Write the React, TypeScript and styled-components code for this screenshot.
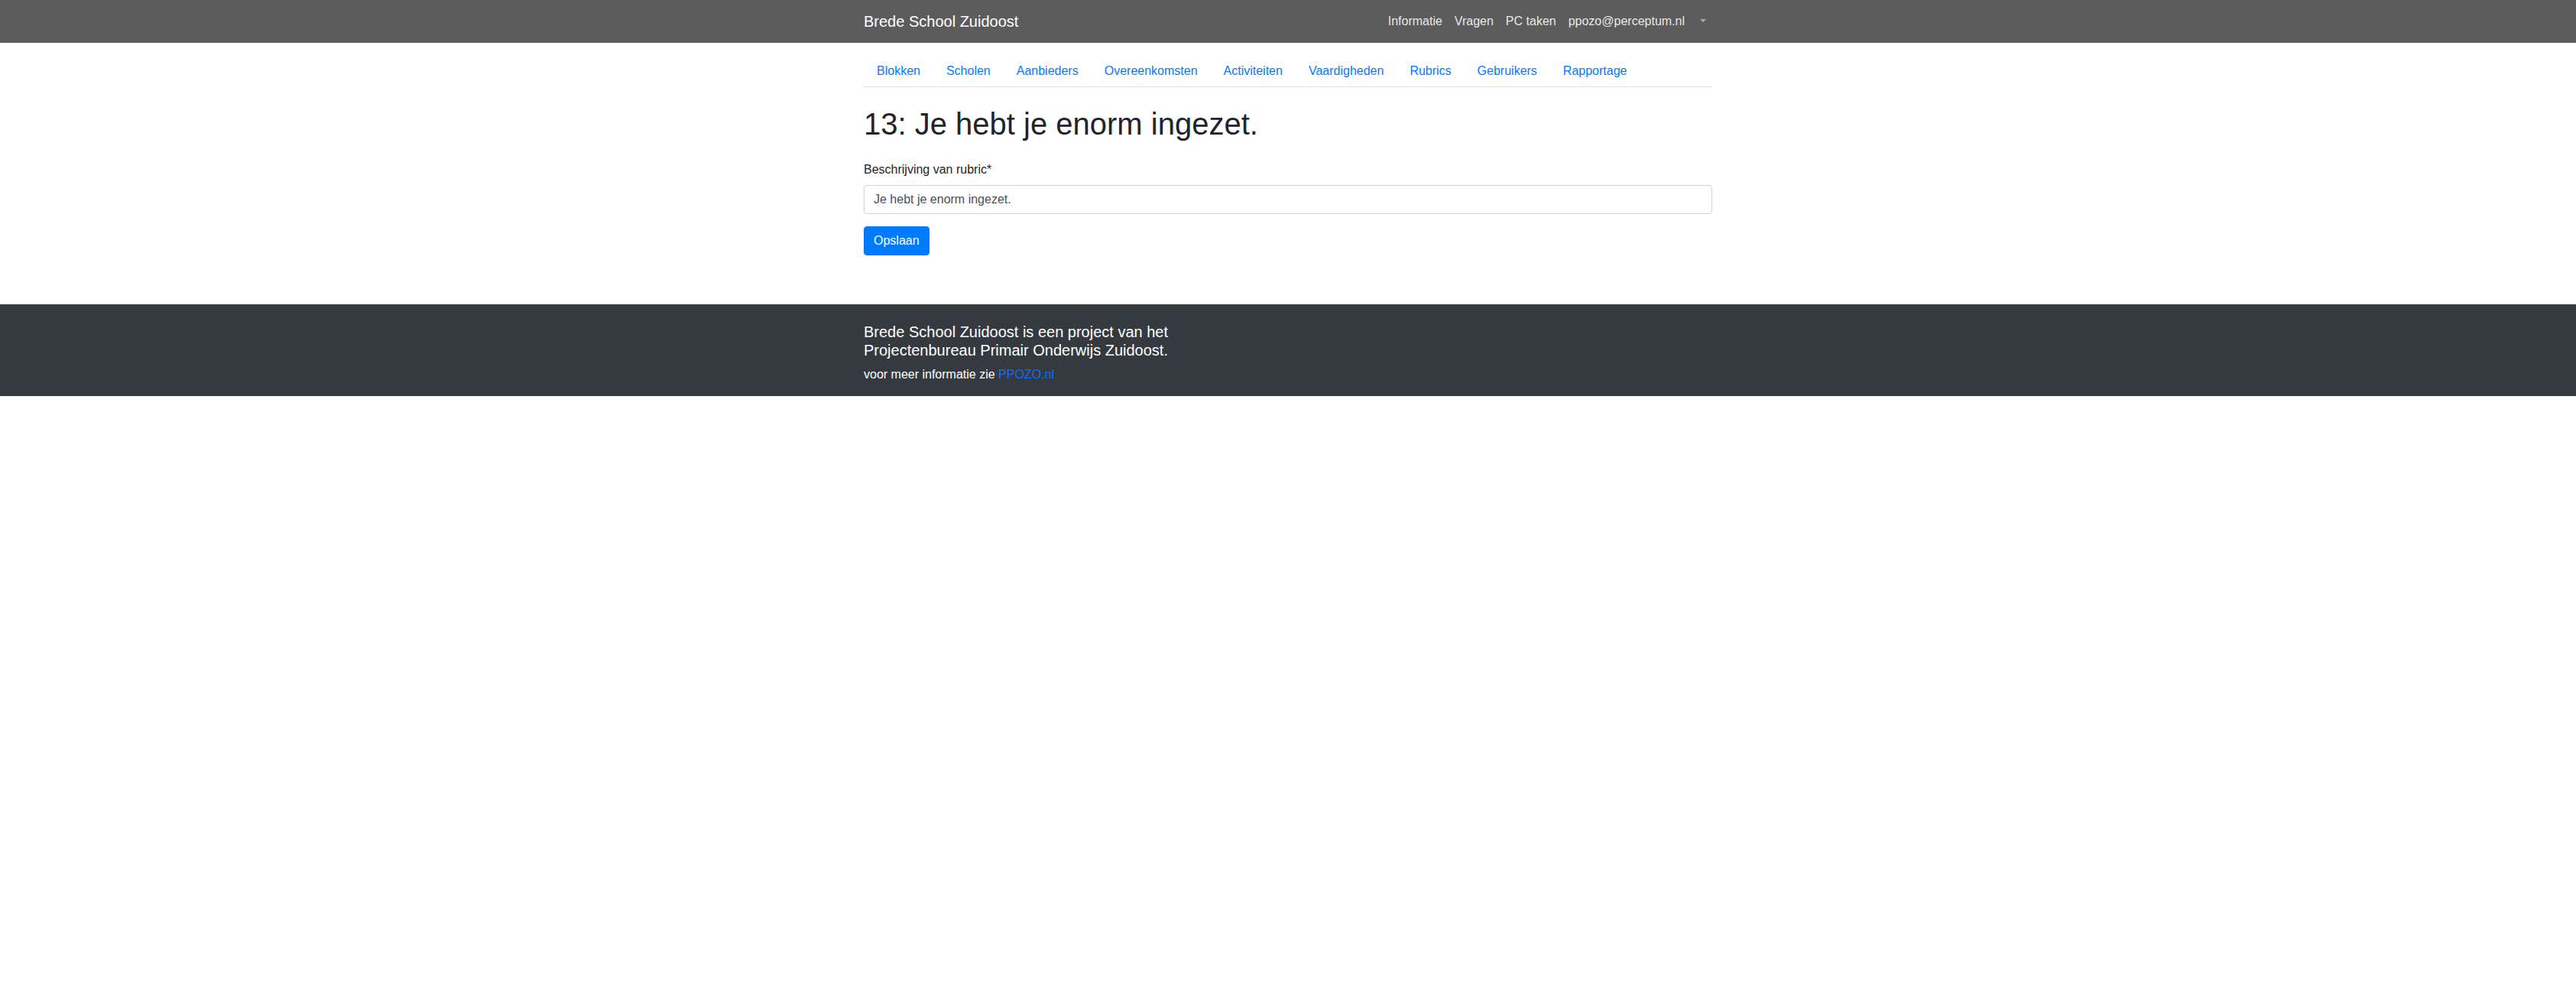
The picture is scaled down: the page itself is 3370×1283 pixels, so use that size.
import React from "react";
import styled, { createGlobalStyle } from "styled-components";

const GlobalStyle = createGlobalStyle`
  *, *::before, *::after { box-sizing: border-box; }
  html, body { margin: 0; padding: 0; background: #fff; }
  body {
    font-family: "Liberation Sans", Arial, sans-serif;
    font-size: 16px;
    line-height: 1.5;
    color: #212529;
  }
`;

const Container = styled.div`
  width: 1140px;
  margin: 0 auto;
  padding: 0 15px;
`;

const Navbar = styled.nav`
  height: 56px;
  background: #5c5c5c;
  padding: 8px 16px;
`;

const NavbarInner = styled(Container)`
  display: flex;
  align-items: center;
  justify-content: space-between;
  height: 40px;
`;

const Brand = styled.a`
  font-size: 20px;
  line-height: 30px;
  color: #fff;
  text-decoration: none;
  padding: 5px 0;
  white-space: nowrap;
`;

const TopNav = styled.ul`
  display: flex;
  list-style: none;
  margin: 0;
  padding: 0;
`;

const TopLink = styled.a`
  display: block;
  padding: 8px;
  color: rgba(255, 255, 255, 0.88);
  text-decoration: none;
  line-height: 24px;
  white-space: nowrap;
`;

const Caret = styled.span`
  display: inline-block;
  margin-left: 4px;
  vertical-align: 4px;
  width: 0;
  height: 0;
  border-top: 4px solid #a8a8a8;
  border-left: 4px solid transparent;
  border-right: 4px solid transparent;
`;

const Tabs = styled.ul`
  display: flex;
  list-style: none;
  margin: 16px 0 0;
  padding: 0;
  border-bottom: 1px solid #dee2e6;
`;

const TabItem = styled.li`
  margin-bottom: -1px;
`;

const TabLink = styled.a`
  display: block;
  padding: 8px 16px;
  border: 1px solid transparent;
  color: #007bff;
  text-decoration: none;
  line-height: 24px;
`;

const Title = styled.h1`
  margin: 24px 0 8px;
  font-size: 40px;
  line-height: 1.2;
  font-weight: 400;
  color: #212529;
`;

const Form = styled.form`
  margin: 0 0 64px;
  padding-top: 16px;
`;

const FormGroup = styled.div`
  margin-bottom: 16px;
`;

const Label = styled.label`
  display: inline-block;
  margin-bottom: 8px;
`;

const Input = styled.input`
  display: block;
  width: 100%;
  height: 38px;
  padding: 6px 12px;
  font-family: inherit;
  font-size: 16px;
  line-height: 1.5;
  color: #495057;
  background: #fff;
  border: 1px solid #ced4da;
  border-radius: 4px;
  outline: none;
`;

const Button = styled.button`
  display: inline-block;
  font-family: inherit;
  font-size: 16px;
  line-height: 1.5;
  padding: 6px 12px;
  color: #fff;
  background: #007bff;
  border: 1px solid #007bff;
  border-radius: 4px;
  cursor: pointer;
`;

const Footer = styled.footer`
  background: #343a40;
  color: #fff;
  padding: 24px 0 16px;
`;

const FooterCol = styled.div`
  width: 540px;
`;

const FooterTitle = styled.h5`
  margin: 0 0 8px;
  font-size: 20px;
  line-height: 1.2;
  font-weight: 400;
`;

const FooterText = styled.p`
  margin: 0;
`;

const FooterLink = styled.a`
  color: #0d6efd;
  text-decoration: none;
`;

const tabs = [
  "Blokken",
  "Scholen",
  "Aanbieders",
  "Overeenkomsten",
  "Activiteiten",
  "Vaardigheden",
  "Rubrics",
  "Gebruikers",
  "Rapportage",
];

export default function App() {
  return (
    <>
      <GlobalStyle />
      <Navbar>
        <NavbarInner>
          <Brand href="#">Brede School Zuidoost</Brand>
          <TopNav>
            <li><TopLink href="#">Informatie</TopLink></li>
            <li><TopLink href="#">Vragen</TopLink></li>
            <li><TopLink href="#">PC taken</TopLink></li>
            <li><TopLink href="#">ppozo@perceptum.nl</TopLink></li>
            <li><TopLink href="#"><Caret /></TopLink></li>
          </TopNav>
        </NavbarInner>
      </Navbar>
      <Container>
        <Tabs>
          {tabs.map((t) => (
            <TabItem key={t}>
              <TabLink href="#">{t}</TabLink>
            </TabItem>
          ))}
        </Tabs>
        <Title>13: Je hebt je enorm ingezet.</Title>
        <Form onSubmit={(e) => e.preventDefault()}>
          <FormGroup>
            <Label htmlFor="beschrijving">Beschrijving van rubric*</Label>
            <Input id="beschrijving" type="text" defaultValue="Je hebt je enorm ingezet." />
          </FormGroup>
          <Button type="submit">Opslaan</Button>
        </Form>
      </Container>
      <Footer>
        <Container>
          <FooterCol>
            <FooterTitle>
              Brede School Zuidoost is een project van het Projectenbureau Primair Onderwijs Zuidoost.
            </FooterTitle>
            <FooterText>
              voor meer informatie zie <FooterLink href="#">PPOZO.nl</FooterLink>
            </FooterText>
          </FooterCol>
        </Container>
      </Footer>
    </>
  );
}
